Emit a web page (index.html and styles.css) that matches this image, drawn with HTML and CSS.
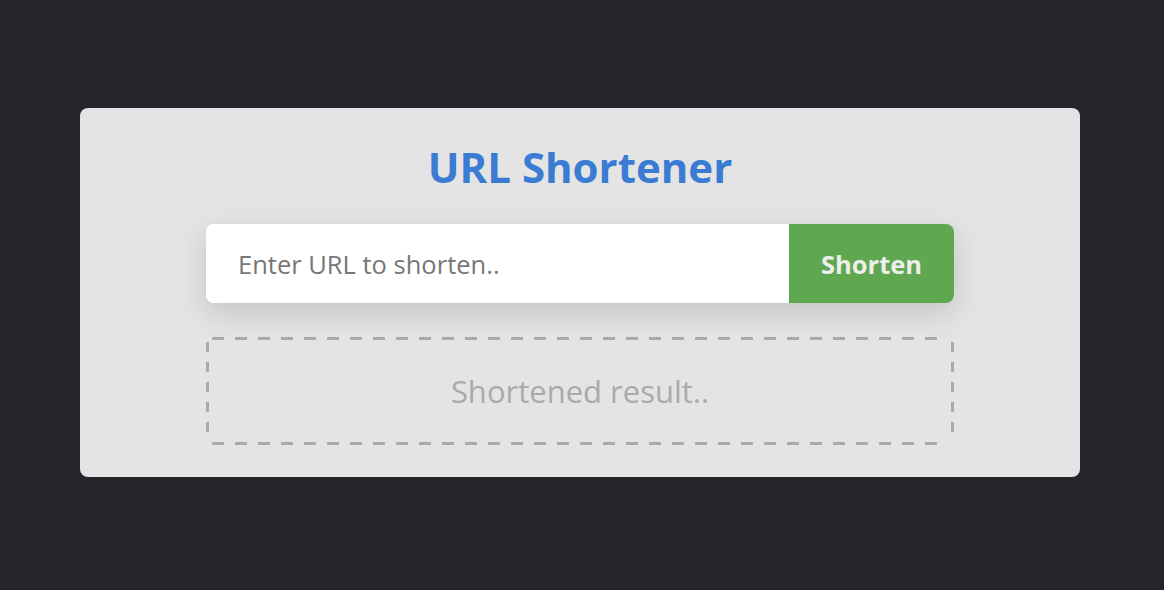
FILE: index.html
```html
<!DOCTYPE html>
<html lang="en">
<head>
<meta charset="utf-8">
<title>URL Shortener</title>
<link rel="stylesheet" href="styles.css">
</head>
<body>
<main class="card">
  <h1 class="title">URL Shortener</h1>
  <form class="shorten-form">
    <input class="url-input" type="text" placeholder="Enter URL to shorten..">
    <button class="shorten-btn" type="button">Shorten</button>
  </form>
  <div class="result">Shortened result..</div>
</main>
</body>
</html>
```
FILE: styles.css
```css
* { box-sizing: border-box; }
html, body { height: 100%; }
body {
  margin: 0;
  background: #26242b;
  font-family: "Open Sans", "Noto Sans", sans-serif;
  padding: 108px 84px 0 80px;
}
.card {
  width: 1000px;
  height: 369px;
  background: #e4e4e4;
  border-radius: 8px;
  display: flex;
  flex-direction: column;
  align-items: center;
  padding-top: 34px;
}
.title {
  margin: 0;
  font-size: 42px;
  line-height: 50px;
  font-weight: 700;
  color: #3a7bd3;
}
.shorten-form {
  margin: 32px 0 0;
  width: 748px;
  height: 79px;
  display: flex;
  border-radius: 8px;
  background: #fff;
  box-shadow: 0 10px 30px rgba(0,0,0,0.14);
  overflow: hidden;
}
.url-input {
  flex: 1;
  border: none;
  outline: none;
  background: #fff;
  padding: 0 0 0 32px;
  font-family: inherit;
  font-size: 25.5px;
  color: #333;
}
.url-input::placeholder { color: #777; }
.shorten-btn {
  width: 165px;
  border: none;
  background: #5fa850;
  color: #eeeeee;
  font-family: inherit;
  font-size: 25.5px;
  font-weight: 700;
  padding: 0;
}
.result {
  margin-top: 34px;
  width: 748px;
  height: 108px;
  border-radius: 4px;
  background:
    repeating-linear-gradient(90deg, #aaa 0 12px, transparent 12px 23px) 6px 0 / calc(100% - 12px) 3px no-repeat,
    repeating-linear-gradient(90deg, #aaa 0 12px, transparent 12px 23px) 6px 100% / calc(100% - 12px) 3px no-repeat,
    repeating-linear-gradient(180deg, #aaa 0 10px, transparent 10px 20px) 0 5px / 3px calc(100% - 10px) no-repeat,
    repeating-linear-gradient(180deg, #aaa 0 10px, transparent 10px 20px) 100% 5px / 3px calc(100% - 10px) no-repeat;
  display: flex;
  align-items: center;
  justify-content: center;
  font-size: 31px;
  color: #aaaaaa;
}
```
